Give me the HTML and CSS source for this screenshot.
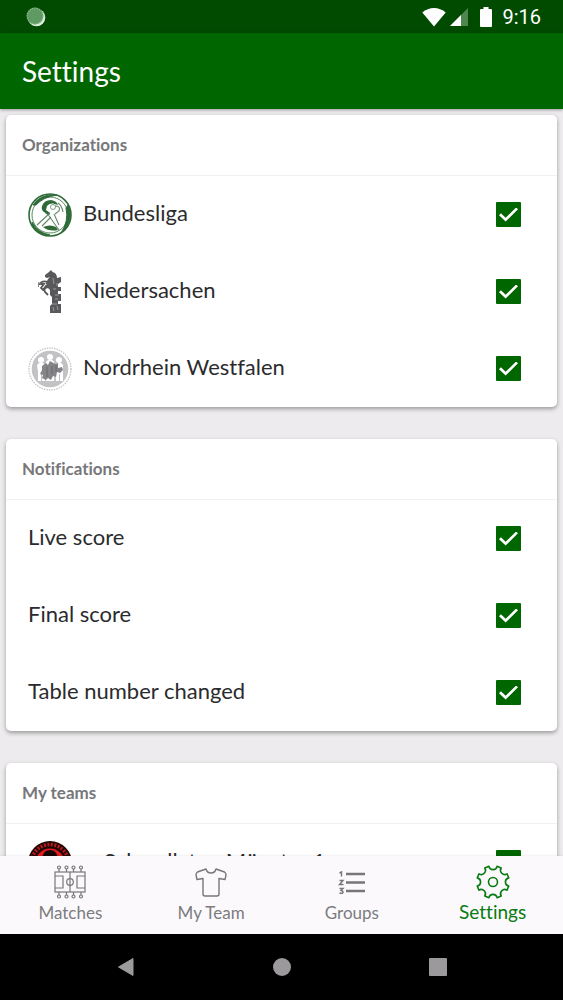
FILE: index.html
```html
<!DOCTYPE html>
<html lang="en">
<head>
<meta charset="utf-8">
<meta name="viewport" content="width=device-width, initial-scale=1">
<title>Settings</title>
<link rel="stylesheet" href="styles.css">
</head>
<body>
<div class="app">
  <div class="status-bar">
    <svg class="status-sync" viewBox="0 0 20 20" width="20" height="20" aria-hidden="true">
      <circle cx="10.5" cy="10.5" r="8.800" fill="#dcebdc"/>
      <circle cx="9" cy="9" r="8.400" fill="#5f9a63"/>
      <circle cx="9" cy="9" r="7.800" fill="none" stroke="#8db890" stroke-width="1.400" stroke-dasharray="1 1.400"/>
    </svg>
    <div class="status-icons">
      <svg viewBox="0 0 24 20" width="24" height="20" aria-hidden="true"><path d="M0.3 5.5C7 -0.6 17 -0.6 23.7 5.5L12 19.5Z" fill="#fff"/></svg>
      <svg viewBox="0 0 18 18" width="18" height="18" aria-hidden="true"><path d="M0 18L18 0V18Z" fill="#4f854f"/><path d="M0 18L11 7V18Z" fill="#fff"/></svg>
      <svg class="battery" viewBox="0 0 12 20" width="12" height="20" aria-hidden="true"><path d="M3.5 0H8.500V2H11Q12 2 12 3V19Q12 20 11 20H1Q0 20 0 19V3Q0 2 1 2H3.500Z" fill="#fff"/></svg>
      <span class="clock">9:16</span>
    </div>
  </div>
  <header class="app-header"><h1>Settings</h1></header>
  <main class="content">
    <section class="card">
      <h2>Organizations</h2>
      <label class="row">
        <svg class="logo" viewBox="0 0 44 44" width="44" height="44" aria-hidden="true">
          <circle cx="22" cy="22" r="21" fill="none" stroke="#2f6b38" stroke-width="1.600"/>
          <circle cx="22" cy="22" r="18" fill="none" stroke="#5b8b61" stroke-width="1"/>
          <path d="M5 12Q13 0 29 2Q15 4 8 12ZM40 12Q47 28 33 40Q41 28 38 15ZM4 29Q10 40 22 42Q10 42 4 32Z" fill="#2f6b38" stroke="#2f6b38"/>
          <path d="M14 13Q16 7 23 7Q29 8 30 12L25 10.500Q21 10 19 13L18 17L22 20L21 23L16 19Q13 17 14 13Z" fill="#2f6b38"/>
          <path d="M22 20L9 32M23 24L14 33M21 23L31 37M26 21L31 32M27 13Q33 13 31 18L27 21M30 10Q34 13 35 19" fill="none" stroke="#64866a" stroke-width="1.100"/>
          <path d="M15 34Q22 31 28 34L30 37Q21 39 15 34Z" fill="#2f6b38"/>
          <circle cx="25" cy="14" r="2.500" fill="#fff" stroke="#64866a" stroke-width=".8"/>
        </svg>
        <span class="name">Bundesliga</span>
        <input type="checkbox" checked>
      </label>
      <label class="row">
        <svg class="logo" viewBox="0 0 44 44" width="44" height="44" aria-hidden="true">
          <path d="M17 5L21 2L23 0L24.500 2Q29 3 29 8L33 7V12L30 14V17H33V21H30V24H33V31H30V34H33V43H22V36L24 34V27L22 25V20L19 17L18 13L20 9L22 7L19 8L17 7Z" fill="#59595c"/>
          <path d="M20 12Q14 10 12 14L16 14L13 18L15 20L18 16H21M20 17Q15 18 17 22L20 25" fill="none" stroke="#59595c" stroke-width="1.800"/>
          <path d="M13 14L10.500 12.500L10.500 17" fill="none" stroke="#858588"/>
          <path d="M25 8L26 14M29 13V16M25 19H28M27 25H31M27 29H30M24 34H29M25 37L26 41M29 36L30 40" fill="none" stroke="#aaaaad" stroke-width=".8"/>
        </svg>
        <span class="name">Niedersachen</span>
        <input type="checkbox" checked>
      </label>
      <label class="row">
        <svg class="logo" viewBox="0 0 44 44" width="44" height="44" aria-hidden="true">
          <circle cx="22" cy="22" r="21" fill="#fff" stroke="#c5c5c8" stroke-width="1.300" stroke-dasharray="1.500 1"/>
          <circle cx="22" cy="22" r="18.300" fill="#c2c2c5"/>
          <g fill="#fff"><circle cx="13" cy="13" r="3"/><circle cx="22" cy="10" r="3"/><circle cx="31" cy="13" r="3"/><path d="M9 18L11 16H15L17 18V34H14V27H13V34H10V25ZM18 15L20 13H24L26 15V34H18ZM27 18L29 16H33L35 18V34H32V27H31V34H28Z"/></g>
          <path d="M14 19L18 16L20 18L22 14L27 17L30 16V21L34 20L35 23L32 26L29 25L28 30L25 29L23 33L20 31L18 33L14 31L15 28L12 27L14 23Z" fill="#858589"/>
          <path d="M19 20V30M24 19V27M28 18V25" stroke="#68686c"/>
        </svg>
        <span class="name">Nordrhein Westfalen</span>
        <input type="checkbox" checked>
      </label>
    </section>
    <section class="card">
      <h2>Notifications</h2>
      <label class="row"><span class="name">Live score</span><input type="checkbox" checked></label>
      <label class="row"><span class="name">Final score</span><input type="checkbox" checked></label>
      <label class="row"><span class="name">Table number changed</span><input type="checkbox" checked></label>
    </section>
    <section class="card">
      <h2>My teams</h2>
      <label class="row team">
        <svg class="logo" viewBox="0 0 44 44" width="44" height="44" aria-hidden="true">
          <circle cx="22" cy="22" r="22" fill="#230606"/>
          <circle cx="22" cy="22" r="18.500" fill="none" stroke="#b5191c" stroke-width="3.500" stroke-dasharray="2 1.500"/>
          <circle cx="22" cy="22" r="14.500" fill="#df1c20"/>
          <path d="M14 18Q15 9 22 9Q29 9 30 18V32H14Z" fill="#160606"/>
        </svg>
        <span class="name">Schwellaten Münster 1</span>
        <input type="checkbox" checked>
      </label>
    </section>
  </main>
  <nav class="tabs" aria-label="Main">
    <a class="tab" href="#matches">
      <svg viewBox="0 0 34 34" width="34" height="34" aria-hidden="true" fill="none" stroke="#77777a" stroke-width="1.200">
        <rect x="2" y="7" width="30" height="20"/><path d="M17 7V27M2 11H10V23H2M32 11H24V23H32M6 4V7M13.500 4V7M20.500 4V7M28 4V7M6 27V30M13.500 27V30M20.500 27V30M28 27V30"/><circle cx="17" cy="17" r="3.300"/>
        <circle cx="6" cy="2.500" r="1.500"/><circle cx="13.500" cy="2.500" r="1.500"/><circle cx="20.500" cy="2.500" r="1.500"/><circle cx="28" cy="2.500" r="1.500"/>
        <circle cx="6" cy="31.500" r="1.500"/><circle cx="13.500" cy="31.500" r="1.500"/><circle cx="20.500" cy="31.500" r="1.500"/><circle cx="28" cy="31.500" r="1.500"/>
      </svg>
      <span>Matches</span>
    </a>
    <a class="tab" href="#team">
      <svg viewBox="0 0 34 34" width="34" height="34" aria-hidden="true" fill="none" stroke="#77777a" stroke-width="1.400" stroke-linejoin="round">
        <path d="M12 4L3.500 7Q2 8 2 10L3 14.500L9 13.500V29Q9 31 11 31H23Q25 31 25 29V13.500L31 14.500L32 10Q32 8 30.500 7L22 4Q21 8 17 8Q13 8 12 4Z"/>
      </svg>
      <span>My Team</span>
    </a>
    <a class="tab" href="#groups">
      <svg viewBox="0 0 34 34" width="34" height="34" aria-hidden="true" fill="none" stroke="#77777a">
        <path d="M11 9H30M11 17.500H30M11 26H30" stroke-width="2.500"/>
        <path d="M4.500 8L6.500 7V11.500M4.500 15.500H8L4.500 19.500H8.500M4.500 23.500H8L6 25.500Q8.500 26 8 27.500Q7 29 4.500 28" stroke-width="1.400"/>
      </svg>
      <span>Groups</span>
    </a>
    <a class="tab active" href="#settings" aria-current="page">
      <svg viewBox="0 0 34 34" width="34" height="34" aria-hidden="true" fill="none" stroke="#087b12" stroke-width="1.600" stroke-linejoin="round">
        <circle cx="17" cy="17" r="4.500"/>
        <path d="M12.900 1.300A4.200 4.200 0 0 0 21.100 1.300L25.200 3A4.200 4.200 0 0 0 31 8.800L32.700 12.900A4.200 4.200 0 0 0 32.700 21.100L31 25.200A4.200 4.200 0 0 0 25.200 31L21.100 32.700A4.200 4.200 0 0 0 12.900 32.700L8.800 31A4.200 4.200 0 0 0 3 25.200L1.300 21.100A4.200 4.200 0 0 0 1.300 12.900L3 8.800A4.200 4.200 0 0 0 8.800 3Z"/>
      </svg>
      <span>Settings</span>
    </a>
  </nav>
  <div class="system-nav">
    <button type="button" aria-label="Back"><svg viewBox="0 0 18 20" width="18" height="20" aria-hidden="true"><path d="M16 1.500V18.500L1.500 10Z" fill="#9b999b" stroke="#9b999b" stroke-linejoin="round"/></svg></button>
    <button type="button" aria-label="Home"><svg viewBox="0 0 18 18" width="18" height="18" aria-hidden="true"><circle cx="9" cy="9" r="9" fill="#9b999b"/></svg></button>
    <button type="button" aria-label="Recent apps"><svg viewBox="0 0 18 18" width="18" height="18" aria-hidden="true"><rect width="18" height="18" rx="1" fill="#9b999b"/></svg></button>
  </div>
</div>
</body>
</html>
```
FILE: styles.css
```css
* { box-sizing: border-box; }
body { margin: 0; font-family: "Lato", "Open Sans", sans-serif; font-variant-ligatures: none; color: #2b2b2d; background: #edebed; }
h1, h2 { margin: 0; }
.app { display: flex; flex-direction: column; height: 100vh; }
.status-bar { display: flex; align-items: center; justify-content: space-between; height: 33px; padding: 0 22px 0 26px; background: #004b00; flex: none; }
.status-icons { display: flex; align-items: center; gap: 4px; }
.battery { margin: 0 6px 0 8px; }
.clock { font: 400 20px/24px Roboto, sans-serif; color: #fff; }
.app-header { display: flex; align-items: center; height: 76px; padding: 0 22px; background: #006600; color: #fff; flex: none; box-shadow: 0 1px 3px rgba(0, 0, 0, .35); }
.app-header h1 { font-size: 28px; line-height: 36px; font-weight: 400; }
.content { flex: 1; min-height: 0; overflow-y: auto; scrollbar-width: none; padding: 6px; display: flex; flex-direction: column; gap: 32px; }
.card { flex: none; background: #fff; border-radius: 5px; box-shadow: 0 2px 4px rgba(0, 0, 0, .35); }
.card h2 { display: flex; align-items: center; height: 61px; padding: 0 16px 2px; border-bottom: 1px solid #f3f2f3; color: #77777a; font-size: 17px; font-weight: 700; }
.row { display: flex; align-items: center; gap: 11px; height: 77px; padding: 0 36px 0 22px; }
.row.team { gap: 32px; }
.logo { flex: none; }
.name { flex: 1; padding-bottom: 3px; font-size: 22px; line-height: 30px; }
.row input { appearance: none; flex: none; width: 25px; height: 25px; margin: 0; border-radius: 1px; background: #006600; display: grid; place-items: center; }
.row input:checked::before { content: ""; width: 19px; height: 14px; background: #fff; clip-path: polygon(0 55%, 10% 41%, 35% 73%, 90% 0, 100% 12%, 35% 100%); }
.tabs { display: grid; grid-template-columns: repeat(4, 1fr); height: 78px; background: #fbf9fc; flex: none; box-shadow: 0 -1px 2px rgba(0, 0, 0, .06); }
.tab { display: flex; flex-direction: column; align-items: center; padding-top: 9px; gap: 3px; color: #7c7c7f; font-size: 17px; line-height: 22px; text-decoration: none; }
.tab.active { color: #087b12; font-size: 19px; line-height: 20px; }
.system-nav { display: flex; justify-content: center; gap: 98px; align-items: center; height: 66px; background: #000; flex: none; }
.system-nav button { display: grid; place-items: center; width: 58px; height: 48px; padding: 0; border: 0; background: none; }
```
